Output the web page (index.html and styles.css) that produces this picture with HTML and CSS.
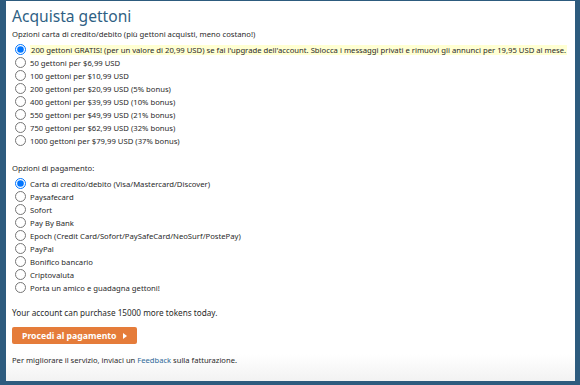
FILE: index.html
```html
<!DOCTYPE html>
<html lang="it">
<head>
  <meta charset="UTF-8">
  <title>Acquista gettoni</title>
  <link rel="stylesheet" href="styles.css">
</head>
<body>
  <div class="panel">
    <h1>Acquista gettoni</h1>
    <p class="label">Opzioni carta di credito/debito (più gettoni acquisti, meno costano!)</p>
    <div class="options">
      <label class="opt highlight"><input type="radio" name="pack" checked><span>200 gettoni GRATIS! (per un valore di 20,99 USD) se fai l'upgrade dell'account. Sblocca i messaggi privati e rimuovi gli annunci per 19,95 USD al mese.</span></label>
      <label class="opt"><input type="radio" name="pack"><span>50 gettoni per $6,99 USD</span></label>
      <label class="opt"><input type="radio" name="pack"><span>100 gettoni per $10,99 USD</span></label>
      <label class="opt"><input type="radio" name="pack"><span>200 gettoni per $20,99 USD (5% bonus)</span></label>
      <label class="opt"><input type="radio" name="pack"><span>400 gettoni per $39,99 USD (10% bonus)</span></label>
      <label class="opt"><input type="radio" name="pack"><span>550 gettoni per $49,99 USD (21% bonus)</span></label>
      <label class="opt"><input type="radio" name="pack"><span>750 gettoni per $62,99 USD (32% bonus)</span></label>
      <label class="opt"><input type="radio" name="pack"><span>1000 gettoni per $79,99 USD (37% bonus)</span></label>
    </div>

    <p class="label pay-label">Opzioni di pagamento:</p>
    <div class="options">
      <label class="opt"><input type="radio" name="pay" checked><span>Carta di credito/debito (Visa/Mastercard/Discover)</span></label>
      <label class="opt"><input type="radio" name="pay"><span>Paysafecard</span></label>
      <label class="opt"><input type="radio" name="pay"><span>Sofort</span></label>
      <label class="opt"><input type="radio" name="pay"><span>Pay By Bank</span></label>
      <label class="opt"><input type="radio" name="pay"><span>Epoch (Credit Card/Sofort/PaySafeCard/NeoSurf/PostePay)</span></label>
      <label class="opt"><input type="radio" name="pay"><span>PayPal</span></label>
      <label class="opt"><input type="radio" name="pay"><span>Bonifico bancario</span></label>
      <label class="opt"><input type="radio" name="pay"><span>Criptovaluta</span></label>
      <label class="opt"><input type="radio" name="pay"><span>Porta un amico e guadagna gettoni!</span></label>
    </div>

    <p class="limit">Your account can purchase 15000 more tokens today.</p>
    <button class="pay-btn">Procedi al pagamento <span class="arrow"></span></button>
    <p class="feedback">Per migliorare il servizio, inviaci un <a href="#">Feedback</a> sulla fatturazione.</p>
  </div>
</body>
</html>
```

FILE: styles.css
```css
body {
  margin: 0;
  background: #2d5b7e;
  font-family: "Noto Sans", sans-serif;
  color: #2a2a2a;
  height: 385px;
  overflow: hidden;
}
.panel {
  margin: 1px 5px 0 6px;
  height: 380px;
  box-sizing: border-box;
  padding: 5px 6px;
  background: linear-gradient(to bottom, #fff 0, #fff 93%, #f2f2f2 100%);
}
h1 {
  margin: 0;
  font-size: 15.6px;
  font-weight: normal;
  color: #2f5f84;
  line-height: 20px;
}
.label {
  margin: 2px 0 3px;
  font-size: 7.7px;
  line-height: 12px;
}
.pay-label {
  margin-top: 15px;
}
.options {
  display: flex;
  flex-direction: column;
  padding-left: 3px;
}
.opt {
  display: flex;
  align-items: center;
  height: 13px;
  font-size: 7.7px;
  white-space: nowrap;
}
.opt input {
  margin: 0 4px 0 0;
  width: 11px;
  height: 11px;
}
.highlight span {
  background: #ffffd2;
  padding: 0 1px;
}
.limit {
  margin: 13px 0 8px;
  font-size: 8.2px;
  line-height: 12px;
}
.pay-btn {
  display: flex;
  align-items: center;
  gap: 6px;
  height: 17px;
  padding: 0 10px;
  border: none;
  border-radius: 2px;
  background: #e57c3a;
  color: #fff;
  font-family: inherit;
  font-size: 8.7px;
  font-weight: bold;
}
.arrow {
  width: 0;
  height: 0;
  border-left: 4px solid #fff;
  border-top: 3.5px solid transparent;
  border-bottom: 3.5px solid transparent;
}
.feedback {
  margin: 10px 0 0;
  font-size: 7.6px;
  line-height: 12px;
}
.feedback a {
  color: #2f6a99;
  text-decoration: none;
}
```
